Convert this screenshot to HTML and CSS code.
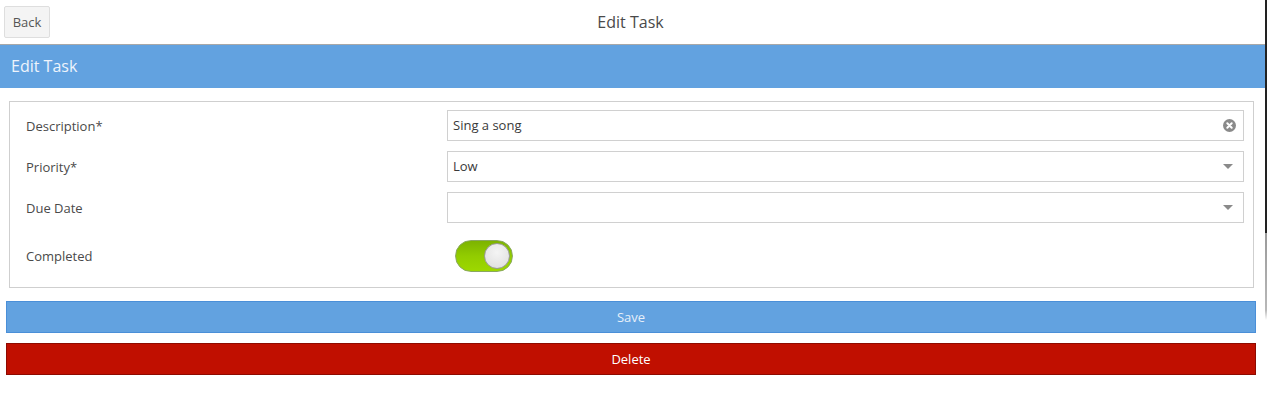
FILE: index.html
```html
<!DOCTYPE html>
<html>
<head>
<meta charset="utf-8">
<link rel="stylesheet" href="styles.css">
</head>
<body>
<div class="page">
  <main class="main">
    <header class="topbar">
      <button class="back">Back</button>
      <div class="title">Edit Task</div>
    </header>
    <div class="section-head">Edit Task</div>
    <div class="content">
      <div class="panel">
        <div class="label">Description*</div>
        <div class="field">
          <span class="value">Sing a song</span>
          <svg class="clear" width="13" height="13" viewBox="0 0 13 13"><circle cx="6.5" cy="6.5" r="6.5" fill="#8a8a8a"/><path d="M4.3 4.3 L8.7 8.7 M8.7 4.3 L4.3 8.7" stroke="#fff" stroke-width="2" stroke-linecap="round"/></svg>
        </div>
        <div class="label">Priority*</div>
        <div class="field">
          <span class="value">Low</span>
          <span class="caret"></span>
        </div>
        <div class="label">Due Date</div>
        <div class="field">
          <span class="value"></span>
          <span class="caret"></span>
        </div>
        <div class="label toggle-row">Completed</div>
        <div class="toggle-row">
          <div class="toggle"><div class="knob"></div></div>
        </div>
      </div>
      <button class="btn save">Save</button>
      <button class="btn delete">Delete</button>
    </div>
  </main>
  <div class="scrollbar"></div>
</div>
</body>
</html>
```
FILE: styles.css
```css
html, body {
  margin: 0;
  padding: 0;
  background: #fff;
  font-family: "Open Sans", "Noto Sans", sans-serif;
  font-size: 13px;
  color: #444;
}
.page {
  display: flex;
  width: 1267px;
  height: 414px;
}
.main {
  flex: 1;
  min-width: 0;
}
.scrollbar {
  width: 2px;
  background: linear-gradient(to bottom, #222 0, #222 233px, #9a9a9a 233px, #b8b8b8 310px, #fff 320px);
}
.topbar {
  height: 44px;
  border-bottom: 1px solid #a8a8a8;
  display: flex;
  align-items: center;
  position: relative;
}
.back {
  margin-left: 4px;
  width: 46px;
  height: 32px;
  background: #f4f4f4;
  border: 1px solid #dedede;
  border-radius: 2px;
  font-family: "Open Sans", sans-serif;
  font-size: 13px;
  color: #555;
  padding: 0;
}
.title {
  position: absolute;
  left: 0;
  right: 4px;
  top: 0;
  height: 44px;
  line-height: 44px;
  text-align: center;
  font-size: 16px;
  color: #4a4a4a;
  pointer-events: none;
}
.section-head {
  height: 43px;
  line-height: 43px;
  background: #62a2e0;
  color: #eef4fc;
  font-size: 16px;
  padding-left: 11px;
}
.content {
  padding: 13px 9px 0 6px;
}
.panel {
  margin-left: 3px;
  margin-right: 2px;
  border: 1px solid #cfcfcf;
  padding: 8px 9px 15px 16px;
  display: grid;
  grid-template-columns: 421px 1fr;
  grid-template-rows: 31px 31px 31px 39px;
  row-gap: 10px;
}
.label {
  display: flex;
  align-items: center;
  color: #4a4a4a;
}
.field {
  border: 1px solid #d0d0d0;
  display: flex;
  align-items: center;
  padding: 0 7px 0 5px;
  color: #3a3a3a;
}
.value {
  flex: 1;
  margin-top: -1px;
}
.clear {
  display: block;
}
.caret {
  width: 0;
  height: 0;
  border-left: 5px solid transparent;
  border-right: 5px solid transparent;
  border-top: 5px solid #8a8a8a;
  margin-right: 3px;
}
.toggle-row {
  padding-top: 7px;
  display: flex;
  align-items: center;
}
.toggle {
  margin-left: 8px;
  width: 54px;
  height: 30px;
  border-radius: 16px;
  border: 1px solid #8aa860;
  background: linear-gradient(to bottom, #7cb300 0%, #92cc00 50%, #9dd800 100%);
  display: flex;
  align-items: center;
  justify-content: flex-end;
  padding-right: 2px;
  box-sizing: content-box;
}
.knob {
  width: 24px;
  height: 24px;
  border-radius: 50%;
  background: radial-gradient(circle at 50% 35%, #f4f4f4 0%, #e4e4e4 70%, #d6d6d6 100%);
  border: 1px solid #9a9a9a;
}
.btn {
  display: block;
  width: 100%;
  height: 32px;
  font-family: "Open Sans", sans-serif;
  font-size: 13px;
  padding: 0;
  border-radius: 0;
}
.save {
  margin-top: 13px;
  background: #62a2e0;
  border: 1px solid #4a8fd8;
  color: #e6eff9;
}
.delete {
  margin-top: 10px;
  background: #c00f00;
  border: 1px solid #8e0a00;
  color: #fff;
}
```
